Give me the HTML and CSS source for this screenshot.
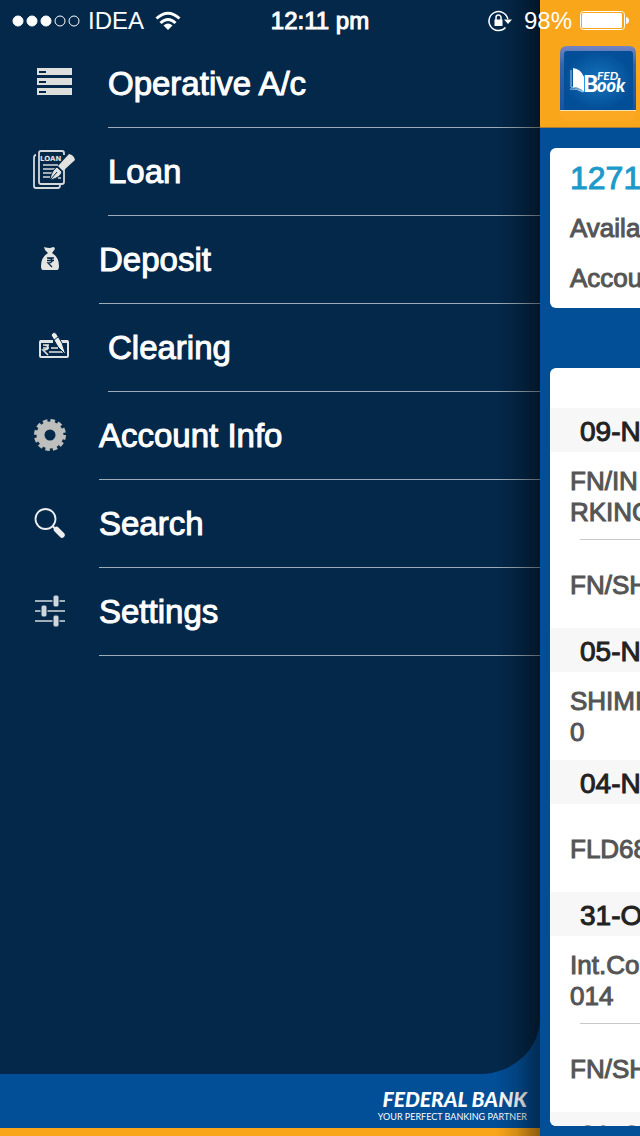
FILE: index.html
```html
<!DOCTYPE html>
<html lang="en">
<head>
<meta charset="utf-8">
<meta name="viewport" content="width=device-width, initial-scale=1">
<title>FedBook</title>
<link rel="stylesheet" href="styles.css">
</head>
<body>
<div class="status">
  <div class="status-left">
    <svg class="signal" width="68" height="14" viewBox="0 0 68 14" fill="#fff" stroke="#fff"><circle cx="6" cy="7" r="5"/><circle cx="20" cy="7" r="5"/><circle cx="34" cy="7" r="5"/><g fill="none"><circle cx="48" cy="7" r="5"/><circle cx="62" cy="7" r="5"/></g></svg>
    <span>IDEA</span>
    <svg width="26" height="20" viewBox="0 0 26 20" fill="none" stroke="#fff" stroke-width="3"><path d="M1.500 7.500Q13-3 24.500 7.500M5.500 12Q13 5 20.500 12"/><path d="M8.500 14.500Q13 10.500 17.500 14.500L13 19Z" fill="#fff" stroke="none"/></svg>
  </div>
  <div class="clock">12:11 pm</div>
  <div class="status-right">
    <svg width="24" height="22" viewBox="0 0 24 22" fill="none" stroke="#fff" stroke-width="1.500"><path d="M17.500 17.500A9.500 9.500 0 1 1 19.800 9"/><path d="M16 9.500h8l-4 4.500z" fill="#fff" stroke="none"/><rect x="6.500" y="9.500" width="8" height="6.500" fill="#fff" stroke="none"/><path d="M8 10V7.500a2.500 2.500 0 0 1 5 0V10"/></svg>
    <span>98%</span>
    <svg width="48" height="20" viewBox="0 0 48 20" fill="none" stroke="#fff"><rect x=".5" y=".5" width="44" height="18" rx="3"/><rect x="2" y="2" width="40" height="15" rx="1.500" fill="#fff" stroke="none"/><path d="M46 6q3 .5 3 3.500t-3 3.500z" fill="#fff" stroke="none"/></svg>
  </div>
</div>

<div class="app">
  <div class="drawer">
    <nav class="menu">
      <a class="item wide" href="#"><span class="icon"><svg width="36" height="28" viewBox="0 0 36 28"><path fill="#dededc" d="M1 0h35v7H1zM1 10h35v7H1zM1 20h35v7H1z"/><path stroke="#04284a" stroke-width="2" d="M3 4h7M3 14h7M3 24h7"/></svg></span><span class="label">Operative A/c</span></a>
      <a class="item wide" href="#"><span class="icon"><svg width="42" height="40" viewBox="0 0 42 40"><g fill="none" stroke="#d6d9dc" stroke-width="1.800"><path d="M31 17v15q0 2-2 2H8q-2 0-2-2V3q0-2 2-2h21q2 0 2 2v2M3 5q-2 0-2 3v28q0 2 2 2h22q2 0 2-3"/><path d="M10 15h15M10 19h12M10 23h9M10 27h7M25 28h3" stroke-width="1.500"/></g><text class="loan-text" x="7" y="11">LOAN</text><path fill="#e2e2e0" d="M36 4q5 1 6 6L30 21l-5-5z"/><path fill="#e2e2e0" stroke="#04284a" d="M24 17l5 5q-1 5-11 8l-1-1q2-9 7-12z"/><path d="M18 29l6-7" stroke="#04284a"/></svg></span><span class="label">Loan</span></a>
      <a class="item" href="#"><span class="icon"><svg width="18" height="24" viewBox="0 0 18 24"><path fill="#e4e4e2" d="M3 1q3 1 6 1 3-1 4-1l1 2-3 4q7 4 7 13 0 4-2 4H2q-2 0-2-4Q0 11 7 7L4 4z"/><path d="M6 12h7M6 14.500h7M7 12q4 0 4 2.500T7 17l4 4" fill="none" stroke="#04284a" stroke-width="1.300"/></svg></span><span class="label">Deposit</span></a>
      <a class="item wide" href="#"><span class="icon"><svg width="30" height="28" viewBox="0 0 30 28"><path d="M13 9H2q-1 0-1 1v14q0 1 1 1h26q1 0 1-1V10q0-1-1-1h-6" fill="none" stroke="#e0e2e4" stroke-width="2"/><path d="M1 8h13v3H1zM21 8h8v3h-8z" fill="#e0e2e4"/><path d="M4 13h6M4 16h6M5 13q4 0 4 2.500T4 18l5 5M12 16h7M10 20h14" fill="none" stroke="#e0e2e4" stroke-width="1.600"/><path d="M12 3q2-4 5-2l6 10 4 12-8-8z" fill="#eceeee" stroke="#04284a"/><path d="M15 8l4-3" stroke="#04284a"/></svg></span><span class="label">Clearing</span></a>
      <a class="item lower" href="#"><span class="icon"><svg width="32" height="32" viewBox="-16 -16 32 32"><circle r="9.500" fill="none" stroke="#bebebc" stroke-width="8"/><circle r="14" fill="none" stroke="#bebebc" stroke-width="4" stroke-dasharray="4.400 2.930"/></svg></span><span class="label">Account Info</span></a>
      <a class="item lower" href="#"><span class="icon"><svg width="32" height="32" viewBox="0 0 32 32"><circle cx="11.500" cy="12" r="10" fill="none" stroke="#eee" stroke-width="1.800"/><path d="M18.500 19l3 3" stroke="#eee" stroke-width="2"/><path d="M22.500 22.500l5.500 5.500" stroke="#eee" stroke-width="5.500" stroke-linecap="round"/></svg></span><span class="label">Search</span></a>
      <a class="item lower" href="#"><span class="icon"><svg width="30" height="32" viewBox="0 0 30 32"><path d="M0 6h30M0 16h30M0 26h30" stroke="#d4dade" stroke-width="1.600"/><g fill="#cfd6dc" stroke="#04284a"><rect x="18" y="0" width="6" height="12" rx="2"/><rect x="6" y="10" width="6" height="12" rx="2"/><rect x="18" y="20" width="6" height="12" rx="2"/></g></svg></span><span class="label">Settings</span></a>
    </nav>
    <footer class="brand"><span class="brand-name">FEDERAL BANK</span><span class="brand-line">YOUR PERFECT BANKING PARTNER</span></footer>
  </div>

  <main class="page">
    <header class="header">
      <div class="logo">
        <svg width="76" height="76" viewBox="0 0 76 76"><defs><radialGradient id="glow"><stop offset="0" stop-color="#1675bd"/><stop offset="1" stop-color="#024e97"/></radialGradient><linearGradient id="rim" x2="0" y2="1"><stop stop-color="#7585c2"/><stop offset=".3" stop-color="#3463ab"/><stop offset="1" stop-color="#1855a2"/></linearGradient></defs><rect y="10" width="76" height="65" rx="7" fill="#fba922"/><path d="M0 64V7q0-7 7-7h62q7 0 7 7v57z" fill="url(#rim)"/><path d="M4 64V8q0-3 3-3h63q3 0 3 3v56z" fill="url(#glow)"/><path d="M0 64.500h76" stroke="#fce0ac"/><path d="M13 22q8 1 11 9v15q-5-5-11-5z" fill="#fff"/><path d="M11 24v17q7 0 12 5M10 43q6-1 13 3" fill="none" stroke="#a9cae6"/><text class="logo-fed" x="37" y="34">FED</text><text class="logo-b" x="23" y="46">B</text><text class="logo-book" x="37" y="46">ook</text></svg>
      </div>
    </header>
    <section class="card account">
      <h1 class="number">1271</h1>
      <p class="detail">Availa</p>
      <p class="detail">Accou</p>
    </section>
    <section class="card history">
      <h2 class="date">09-N</h2>
      <div class="entry">FN/IN<br>RKING</div>
      <div class="entry">FN/SH</div>
      <h2 class="date">05-N</h2>
      <div class="entry">SHIMI<br>0</div>
      <h2 class="date">04-N</h2>
      <div class="entry">FLD68</div>
      <h2 class="date">31-O</h2>
      <div class="entry">Int.Co<br>014</div>
      <div class="entry">FN/SH</div>
      <h2 class="date">30-O</h2>
    </section>
  </main>
</div>
</body>
</html>
```

FILE: styles.css
```css
* { box-sizing: border-box; }

body {
  margin: 0;
  font-family: "Liberation Sans", Arial, sans-serif;
  color: #fff;
  background: #024e97;
}

svg { display: block; flex: none; overflow: visible; }

/* Status bar lies over both the drawer and the page */
.status {
  position: absolute;
  inset: 0 0 auto;
  z-index: 2;
  height: 41px;
  padding: 0 12px;
  display: grid;
  grid-template-columns: 1fr auto 1fr;
  align-items: center;
  font-size: 24px;
}
.status-left, .status-right { display: flex; align-items: center; gap: 8px; }
.status-left { gap: 11px; }
.signal { margin-right: -3px; }
.status-right { justify-content: flex-end; }
.status-right span { margin-left: 4px; }
.clock { -webkit-text-stroke: 1px; }

.app {
  display: grid;
  grid-template-columns: minmax(0, 1fr) 100px;
  height: 100vh;
  overflow: hidden;
}

.drawer {
  position: relative;
  display: flex;
  flex-direction: column;
  background: #024e97;
}
.drawer::after {
  content: "";
  position: absolute;
  inset: 0 0 0 auto;
  width: 44px;
  background: linear-gradient(90deg, transparent, rgba(0, 0, 0, .15) 45%, rgba(0, 0, 0, .45));
  pointer-events: none;
}

.menu {
  flex: 1;
  padding-top: 40px;
  background: #04284a;
  border-bottom-right-radius: 60px 56px;
}
.item {
  display: grid;
  grid-template-columns: 99px 1fr;
  height: 88px;
  color: inherit;
  text-decoration: none;
}
.item.wide { grid-template-columns: 108px 1fr; }
.icon {
  display: flex;
  align-items: center;
  justify-content: center;
  padding-bottom: 4px;
}
.lower .icon { padding-bottom: 2px; }
.label {
  display: flex;
  align-items: center;
  border-bottom: 1px solid #9babb8;
  font-size: 33px;
  -webkit-text-stroke: 1px;
}
.loan-text { font: bold 7px "DejaVu Sans", sans-serif; fill: #e2e2e0; }

.brand {
  height: 62px;
  padding: 12px 13px 0;
  border-bottom: 8px solid #faa61a;
  display: flex;
  flex-direction: column;
  align-items: flex-end;
}
.brand-name { font: italic 900 21px/26px Lato, sans-serif; }
.brand-line { font: 9px/9px Lato, sans-serif; }

.page {
  display: flex;
  flex-direction: column;
  min-width: 0;
  min-height: 0;
  overflow: hidden;
  padding-bottom: 10px;
  background: #024e97;
}
.header {
  flex: none;
  height: 128px;
  padding: 46px 0 0 20px;
  background: #faa61a;
  border-bottom: 1px solid #a87b3f;
}
.logo-fed { font: italic bold 12px Lato, sans-serif; fill: #fff; }
.logo-b { font: 900 23px Lato, sans-serif; fill: #fff; }
.logo-book { font: italic 900 18px Lato, sans-serif; fill: #fff; }

.card {
  margin-left: 10px;
  border-radius: 6px 0 0 6px;
  background: #fff;
  overflow: hidden;
  white-space: nowrap;
  color: #555;
}
.account { flex: none; margin-top: 20px; padding: 5px 0 5px 20px; }
.number {
  margin: 0;
  font-size: 32px;
  font-weight: normal;
  line-height: 50px;
  color: #1c9aca;
  -webkit-text-stroke: 1px;
}
.detail { margin: 0; font-size: 26px; line-height: 50px; -webkit-text-stroke: 1px; }
.history { flex: 1; min-height: 0; margin-top: 60px; padding-top: 40px; }
.date {
  height: 44px;
  margin: 0;
  padding-left: 30px;
  background: #f7f7f7;
  color: #222;
  font-size: 28px;
  font-weight: normal;
  line-height: 48px;
  -webkit-text-stroke: 1px;
}
.entry {
  height: 88px;
  padding: 2px 0 0 20px;
  display: flex;
  align-items: center;
  font-size: 26px;
  line-height: 31px;
  -webkit-text-stroke: 1px;
}
.entry:has(+ .entry) {
  background: linear-gradient(#c8c8c8, #c8c8c8) 30px 100% / 100% 1px no-repeat;
}
```
